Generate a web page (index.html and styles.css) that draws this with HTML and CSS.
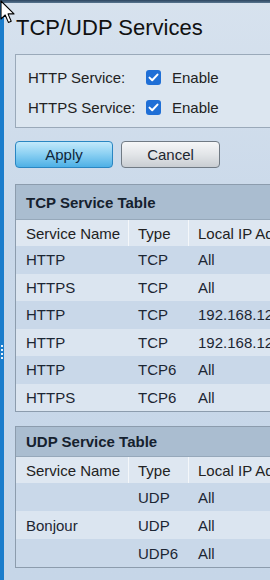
FILE: index.html
```html
<!DOCTYPE html>
<html lang="en">
<head>
<meta charset="UTF-8">
<meta name="viewport" content="width=device-width, initial-scale=1.0">
<title>TCP/UDP Services</title>
<link rel="stylesheet" href="styles.css">
</head>
<body>
  <div class="top-bar"></div>
  <div class="page">
    <div class="side-bar">
      <div class="grip"><span></span><span></span><span></span><span></span></div>
    </div>
    <div class="content">
      <h1>TCP/UDP Services</h1>

      <div class="service-box">
        <div class="service-row">
          <span class="service-label">HTTP Service:</span>
          <span class="check"><svg width="11" height="9" viewBox="0 0 11 9"><path d="M1.5 4.6 L4.2 7.2 L9.5 1.6" fill="none" stroke="#fff" stroke-width="2" stroke-linecap="round" stroke-linejoin="round"/></svg></span>
          <span class="check-text">Enable</span>
        </div>
        <div class="service-row">
          <span class="service-label">HTTPS Service:</span>
          <span class="check"><svg width="11" height="9" viewBox="0 0 11 9"><path d="M1.5 4.6 L4.2 7.2 L9.5 1.6" fill="none" stroke="#fff" stroke-width="2" stroke-linecap="round" stroke-linejoin="round"/></svg></span>
          <span class="check-text">Enable</span>
        </div>
      </div>

      <div class="buttons">
        <button class="btn btn-apply">Apply</button>
        <button class="btn btn-cancel">Cancel</button>
      </div>

      <div class="service-table tcp">
        <div class="table-title">TCP Service Table</div>
        <table>
          <colgroup><col class="c-name"><col class="c-type"><col class="c-ip"></colgroup>
          <thead>
            <tr><th>Service Name</th><th>Type</th><th>Local IP Address</th></tr>
          </thead>
          <tbody>
            <tr><td>HTTP</td><td>TCP</td><td>All</td></tr>
            <tr><td>HTTPS</td><td>TCP</td><td>All</td></tr>
            <tr><td>HTTP</td><td>TCP</td><td>192.168.120.1</td></tr>
            <tr><td>HTTP</td><td>TCP</td><td>192.168.120.1</td></tr>
            <tr><td>HTTP</td><td>TCP6</td><td>All</td></tr>
            <tr><td>HTTPS</td><td>TCP6</td><td>All</td></tr>
          </tbody>
        </table>
      </div>

      <div class="service-table udp">
        <div class="table-title">UDP Service Table</div>
        <table>
          <colgroup><col class="c-name"><col class="c-type"><col class="c-ip"></colgroup>
          <thead>
            <tr><th>Service Name</th><th>Type</th><th>Local IP Address</th></tr>
          </thead>
          <tbody>
            <tr><td></td><td>UDP</td><td>All</td></tr>
            <tr><td>Bonjour</td><td>UDP</td><td>All</td></tr>
            <tr><td></td><td>UDP6</td><td>All</td></tr>
          </tbody>
        </table>
      </div>
    </div>
  </div>

  <svg class="cursor" width="16" height="24" viewBox="0 0 16 24">
    <path d="M1 1 L1 19 L5.2 15 L8.4 22.4 L11.2 21.2 L8 13.9 L14 13.9 Z" fill="#fff" stroke="#000" stroke-width="1.1" stroke-linejoin="round"/>
  </svg>
</body>
</html>
```

FILE: styles.css
```css
body {
  margin: 0;
  font-family: "Liberation Sans", Arial, sans-serif;
  color: #1c2633;
  background: linear-gradient(#d7e2ee, #c9d8e9 40%, #c6d6e8);
  overflow: hidden;
  height: 580px;
  position: relative;
}
.top-bar {
  height: 3px;
  background: linear-gradient(#2c4560, #58758f);
}
.page {
  display: flex;
}
.side-bar {
  width: 4px;
  min-height: 577px;
  background: #1b7dcc;
  flex: none;
  display: flex;
  flex-direction: column;
  justify-content: center;
}
.grip {
  display: flex;
  flex-direction: column;
  gap: 2px;
  margin-top: 120px;
  padding-left: 1px;
}
.grip span {
  display: block;
  width: 2px;
  height: 2px;
  background: #e8f2fb;
}
.content {
  flex: none;
  width: 420px;
  padding-left: 11px;
}
h1 {
  font-size: 22px;
  font-weight: normal;
  line-height: 26px;
  margin: 12px 0 0 1px;
  color: #111;
}
.service-box {
  margin-top: 13px;
  border: 1px solid #9aa9b9;
  background: #dce6f0;
  padding: 7px 0 5px 12px;
}
.service-row {
  height: 30px;
  display: flex;
  align-items: center;
  font-size: 15px;
  color: #222;
}
.service-label {
  width: 118px;
}
.check {
  width: 15px;
  height: 15px;
  border-radius: 3px;
  background: #1f6fd6;
  display: flex;
  align-items: center;
  justify-content: center;
}
.check-text {
  margin-left: 11px;
}
.buttons {
  margin-top: 13px;
  display: flex;
  gap: 8px;
}
.btn {
  height: 27px;
  font-family: "Liberation Sans", Arial, sans-serif;
  font-size: 15px;
  color: #1d2630;
  border-radius: 4px;
  padding: 0;
}
.btn-apply {
  width: 98px;
  border: 1px solid #2a86c2;
  background: linear-gradient(#c3e9fb, #8fd2f3 45%, #4eb0e6);
  color: #10263a;
}
.btn-cancel {
  width: 99px;
  border: 1px solid #707a84;
  background: linear-gradient(#f6f7f8, #e2e5e8 50%, #c9cdd2);
}
.service-table {
  margin-top: 16px;
  border: 1px solid #8c9cad;
  width: 400px;
}
.service-table + .service-table {
  margin-top: 14px;
}
.table-title {
  height: 34px;
  line-height: 36px;
  padding-left: 10px;
  font-size: 15px;
  font-weight: bold;
  color: #15212e;
  background: #aabdd0;
  border-bottom: 1px solid #96a8ba;
}
.udp .table-title {
  height: 29px;
  line-height: 30px;
}
table {
  border-collapse: separate;
  border-spacing: 0;
  table-layout: fixed;
  width: 100%;
  font-size: 15px;
}
.c-name { width: 112px; }
.c-type { width: 60px; }
th {
  height: 26px;
  padding: 0 0 0 10px;
  text-align: left;
  font-weight: normal;
  color: #222;
  background: #dee7f1;
  white-space: nowrap;
  overflow: hidden;
}
th + th {
  border-left: 1px solid #f4f7fa;
  padding-left: 9px;
}
td {
  height: 27px;
  padding: 0 0 0 10px;
  color: #1c2633;
  white-space: nowrap;
  overflow: hidden;
}
.tcp td {
  height: 27.5px;
}
.udp td {
  height: 28px;
}
tbody tr:nth-child(odd) td {
  background: #c9d8e9;
}
tbody tr:nth-child(even) td {
  background: #dbe5f0;
}
.cursor {
  position: absolute;
  left: 0;
  top: 0;
}
```
